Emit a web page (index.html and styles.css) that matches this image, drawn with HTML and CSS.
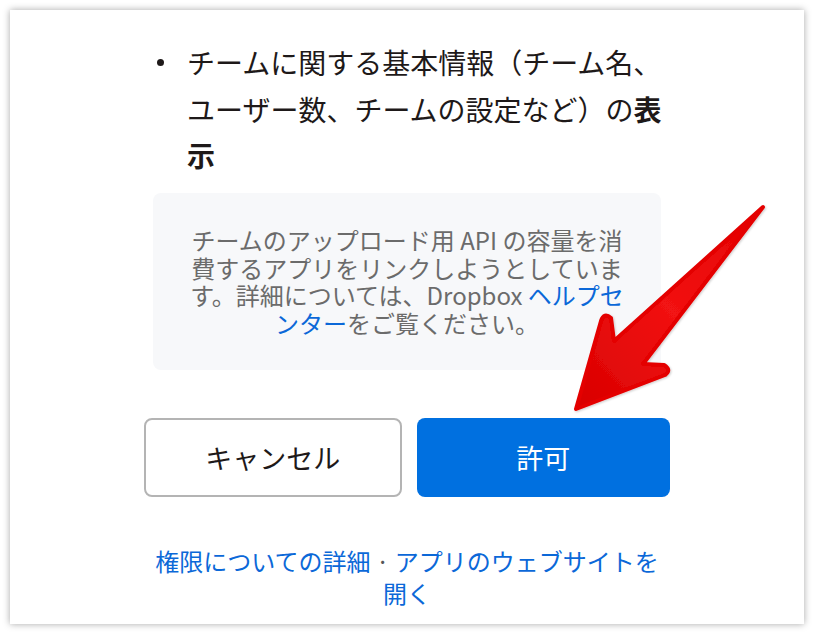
FILE: index.html
```html
<!DOCTYPE html>
<html lang="ja">
<head>
<meta charset="utf-8">
<link rel="stylesheet" href="styles.css">
</head>
<body>
<div class="card">
  <div class="content">
    <div class="item">
      <span class="bullet"><span class="dot"></span></span>
      <p class="item-text">チームに関する基本情報（チーム名、ユーザー数、チームの設定など）の<b>表示</b></p>
    </div>
    <div class="notice">
      <p>チームのアップロード用 API の容量を消費するアプリをリンクしようとしています。詳細については、Dropbox <a href="#" class="link">ヘルプセンター</a>をご覧ください。</p>
    </div>
    <div class="buttons">
      <button class="btn btn-cancel">キャンセル</button>
      <button class="btn btn-allow">許可</button>
    </div>
    <p class="footer-links"><a href="#" class="link">権限についての詳細</a> · <a href="#" class="link">アプリのウェブサイトを開く</a></p>
  </div>
  <svg class="arrow" width="220" height="230" viewBox="555 195 220 230" xmlns="http://www.w3.org/2000/svg">
    <defs>
      <linearGradient id="rg" x1="0" y1="1" x2="1" y2="0">
        <stop offset="0" stop-color="#d80000"/>
        <stop offset="0.5" stop-color="#f21212"/>
        <stop offset="1" stop-color="#e40000"/>
      </linearGradient>
      <filter id="sh" x="-20%" y="-20%" width="140%" height="140%">
        <feDropShadow dx="1" dy="1" stdDeviation="1.2" flood-color="#000" flood-opacity="0.2"/>
      </filter>
    </defs>
    <path filter="url(#sh)" fill="url(#rg)" stroke="#e40000" stroke-width="4" stroke-linejoin="round" d="M576 409 L601 321 Q604 312 611 318 L614 341 L763 207 L643 364 L664 365 Q672 370 665 375 Z"/>
  </svg>
</div>
</body>
</html>
```
FILE: styles.css
```css
* { box-sizing: border-box; }
html, body {
  margin: 0;
  padding: 0;
  background: #ffffff;
}
body {
  font-family: "Noto Sans CJK JP", "Noto Sans", sans-serif;
}
.card {
  position: relative;
  margin: 10px;
  width: 794px;
  height: 614px;
  background: #fff;
  box-shadow: 0 0 7px rgba(0,0,0,0.35);
  overflow: hidden;
  padding-top: 29px;
}
.content {
  width: 508px;
  margin: 0 auto;
  display: flex;
  flex-direction: column;
}
.item {
  display: flex;
  color: #1e1919;
}
.bullet {
  width: 34px;
  flex: none;
  height: 46px;
  display: flex;
  align-items: center;
  padding-left: 4px;
}
.dot {
  width: 7px;
  height: 7px;
  border-radius: 50%;
  background: #1e1919;
}
.item-text {
  margin: 0;
  flex: none;
  width: 482px;
  font-size: 28px;
  line-height: 46.5px;
}
.item-text b { font-weight: 700; }
.notice {
  margin-top: 14px;
  height: 177px;
  background: #f7f8fa;
  border-radius: 8px;
  display: flex;
  align-items: center;
  justify-content: center;
  padding: 0 31px;
}
.notice p {
  margin: 0;
  text-align: center;
  color: #6b6b6b;
  font-size: 24px;
  line-height: 27.5px;
}
.link {
  color: #0b68d8;
  text-decoration: none;
}
.buttons {
  margin: 48px -9px 0 -9px;
  display: flex;
  gap: 15px;
}
.btn {
  flex: 1 1 0;
  min-width: 0;
  height: 79px;
  border-radius: 8px;
  font-family: "Noto Sans CJK JP", "Noto Sans", sans-serif;
  font-size: 27px;
  cursor: pointer;
}
.btn-cancel {
  background: #fff;
  border: 2px solid #b4b4b4;
  color: #1e1919;
}
.btn-allow {
  background: #0070e0;
  border: none;
  color: #fff;
}
.footer-links {
  margin: 48px 0 0;
  text-align: center;
  font-size: 24px;
  line-height: 32px;
  color: #555;
}
.arrow {
  position: absolute;
  left: 545px;
  top: 185px;
}
```
